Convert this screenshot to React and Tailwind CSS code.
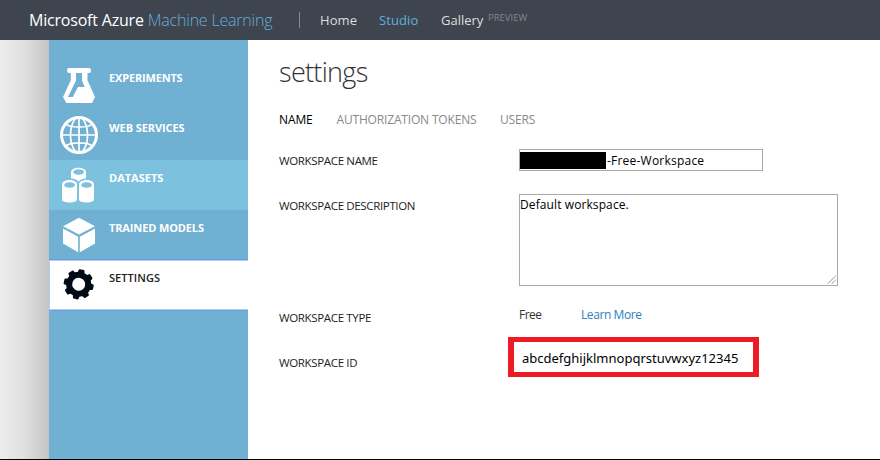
import React from "react";

const FlaskIcon = () => (
  <svg className="size-10 shrink-0" viewBox="0 0 40 40" fill="#fff">
    <rect x="7" y="4" width="24" height="5" rx="2.2" />
    <path
      fillRule="evenodd"
      d="M10.8 7h16.7v9.3L35 33l-3 6H6.300L3 33l7.800-16.700zM16 9v7.500L8 33h4.800L18 23h6.600L22 16.500V9z"
    />
  </svg>
);

const GlobeIcon = () => (
  <svg className="size-10 shrink-0" viewBox="0 0 40 40" fill="none" stroke="#fff" strokeWidth="1.700">
    <circle cx="19" cy="21" r="17.500" strokeWidth="3" />
    <ellipse cx="19" cy="21" rx="8.600" ry="17.500" />
    <path d="M19 3v36M1 21h36M5 9.500c5 4.800 23 4.800 28 0M5 32.500c5-4.800 23-4.800 28 0" />
  </svg>
);

const DatasetsIcon = () => (
  <svg className="size-10 shrink-0" viewBox="0 0 40 40" fill="#fff">
    <path
      fillRule="evenodd"
      d="M11 8.200c0-6 15-6 15 0V14.500c-3.500.2-6.500 1.200-7.500 3.300-1-2.100-4-3.100-7.500-3.300zM13.200 8a5.400 2.800 0 0 0 10.800 0a5.400 2.800 0 0 0-10.800 0z"
    />
    <path
      fillRule="evenodd"
      d="M2 20.500c0-6 15-6 15 0V35.500c0 4-15 4-15 0zM4.200 21a5.400 2.800 0 0 0 10.800 0a5.400 2.800 0 0 0-10.800 0z"
    />
    <path
      fillRule="evenodd"
      d="M19 20.500c0-6 15-6 15 0V35.500c0 4-15 4-15 0zM21.200 21a5.400 2.800 0 0 0 10.800 0a5.400 2.800 0 0 0-10.800 0z"
    />
  </svg>
);

const CubeIcon = () => (
  <svg className="size-10 shrink-0" viewBox="0 0 40 40" fill="#fff">
    <path d="M19 3.700L35 12.300 19 20.600 3 12.300zM3 14.500l15.200 8.300V38.200L3 29.500zM35 14.500l-15.200 8.300V38.200L35 29.500z" />
  </svg>
);

const GearIcon = () => (
  <svg className="size-10 shrink-0" viewBox="0 0 40 40">
    <g transform="translate(18.700 20.300) rotate(12)" fill="#020a16">
      {[0, 45, 90, 135, 180, 225, 270, 315].map((a) => (
        <path key={a} transform={`rotate(${a})`} d="M-3.700-10L-2.900-14.200Q-2.700-15-2-15H2Q2.700-15 2.900-14.200L3.700-10z" />
      ))}
      <circle r="9.500" fill="none" stroke="#020a16" strokeWidth="6" />
    </g>
  </svg>
);

const items = [
  { label: "EXPERIMENTS", Icon: FlaskIcon, row: "text-white", text: "font-bold tracking-[-0.17px]" },
  { label: "WEB SERVICES", Icon: GlobeIcon, row: "text-white", text: "font-bold tracking-[-0.08px]" },
  { label: "DATASETS", Icon: DatasetsIcon, row: "bg-[#7cc1de] text-white", text: "font-bold tracking-[0px]" },
  { label: "TRAINED MODELS", Icon: CubeIcon, row: "text-white", text: "font-bold tracking-[-0.13px]" },
  {
    label: "SETTINGS",
    Icon: GearIcon,
    row: "bg-white text-[#222] shadow-[inset_1px_0_0_#b3cdf8,inset_0_1px_0_#b3cdf8,inset_0_-1px_0_#b3cdf8,0_-1px_0_#669fe6,0_1px_0_#669fe6]",
    text: "font-semibold tracking-[0.05px]",
  },
];

const Label = ({ children }) => (
  <div className="w-[240px] shrink-0 text-[11.5px] leading-4 tracking-[-0.35px] text-[#222]">{children}</div>
);

export default function App() {
  return (
    <div className="flex h-[460px] w-[880px] flex-col overflow-hidden border-b border-black bg-white font-['Open_Sans',sans-serif] whitespace-nowrap">
      <header className="flex h-10 shrink-0 items-center bg-[#3e454f] pl-[29px]">
        <div className="w-[270px] text-[16px] leading-5 tracking-[-0.2px] text-white">
          Microsoft Azure <span className="font-light text-[#68addb]">Machine Learning</span>
        </div>
        <div className="h-4 w-px bg-[#858a91]" />
        <nav className="flex pl-5 text-[13px] leading-5 text-[#dedede]">
          <span className="w-[59px] tracking-[0.1px]">Home</span>
          <span className="w-[62px] tracking-[0.1px] text-[#5fb0df]">Studio</span>
          <span className="w-[47px]">Gallery</span>
          <span className="-mt-[2px] text-[9.500px] text-[#83868a]">PREVIEW</span>
        </nav>
      </header>
      <div className="flex min-h-0 flex-1">
        <div className="w-[49px] bg-linear-to-r from-[#ededed] via-[#dfdfdf] to-[#c4c4c4]" />
        <aside className="w-[199px] bg-[#70b0d2] pt-5">
          {items.map(({ label, Icon, row, text }) => (
            <div key={label} className={`flex h-[50px] pt-1 pl-[11px] ${row}`}>
              <Icon />
              <span className={`mt-1.5 ml-[9px] text-[11px] leading-4 ${text}`}>{label}</span>
            </div>
          ))}
        </aside>
        <main className="flex-1 pt-3 pl-[31px]">
          <h1 className="h-10 text-[27px] leading-10 font-light tracking-[-0.7px] text-[#333]">settings</h1>
          <div className="mt-5 flex h-4 text-[12px] leading-4 tracking-[-0.17px] text-[#888]">
            <span className="w-[57.500px] tracking-[-0.1px] text-black">NAME</span>
            <span className="w-[163.500px]">AUTHORIZATION TOKENS</span>
            <span>USERS</span>
          </div>
          <div className="mt-[21px] flex h-[22px]">
            <div className="pt-1">
              <Label>WORKSPACE NAME</Label>
            </div>
            <div className="flex h-[22px] w-[244px] items-center border border-[#a9a9a9] text-[12px] text-black">
              <span className="mt-px h-[17px] w-[86px] bg-black" />
              <span className="mt-px ml-px leading-4 tracking-[0.22px]">-Free-Workspace</span>
            </div>
          </div>
          <div className="mt-[23px] flex h-[92px]">
            <div className="pt-1">
              <Label>WORKSPACE DESCRIPTION</Label>
            </div>
            <div className="flex h-[92px] w-[319px] items-start justify-between border border-[#a9a9a9] text-[12px] leading-[20px] text-black">
              <span className="tracking-[0.1px]">Default workspace.</span>
              <svg className="size-2.5 self-end" viewBox="0 0 10 10" stroke="#555" strokeWidth="1">
                <path d="M1 8.500L8.500 1M5 8.500L8.500 5" strokeDasharray="1 .4" />
              </svg>
            </div>
          </div>
          <div className="mt-[20px] flex h-[22px]">
            <div className="pt-1">
              <Label>WORKSPACE TYPE</Label>
            </div>
            <span className="w-[62px] pt-px text-[12px] leading-4 tracking-[-0.5px] text-[#333]">Free</span>
            <span className="pt-px text-[12px] leading-4 tracking-[-0.42px] text-[#2c7fc0]">Learn More</span>
          </div>
          <div className="mt-[9px] flex h-10">
            <div className="w-[229px] pt-[18px]">
              <Label>WORKSPACE ID</Label>
            </div>
            <div className="flex h-10 w-[251px] items-center border-x-6 border-y-5 border-[#ed1c24] pt-px pl-2 text-black">
              <span className="font-['Noto_Sans',sans-serif] text-[13px] leading-4">abcdefghijklmnopqrstuvwxyz12345</span>
            </div>
          </div>
        </main>
      </div>
    </div>
  );
}
